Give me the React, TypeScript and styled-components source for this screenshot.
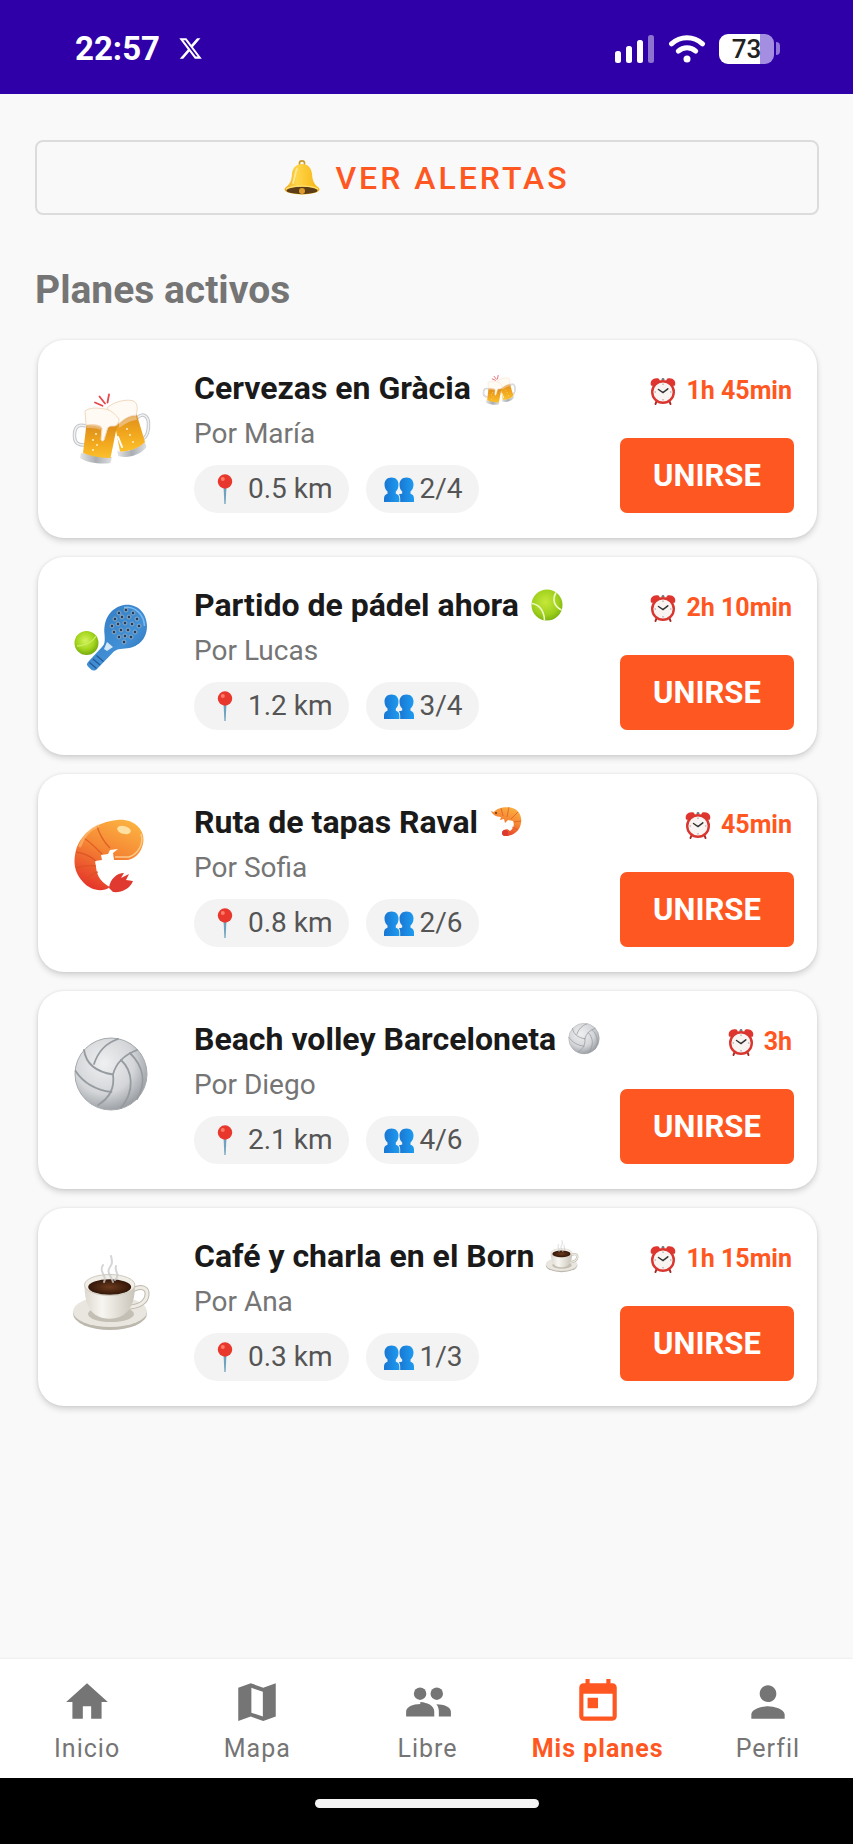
import React from 'react';
import styled, { createGlobalStyle } from 'styled-components';
import { MdHome, MdPerson, MdToday } from 'react-icons/md';

type IconProps = {
  size: number
};

type Plan = {
  title: string,
  host: string,
  distance: string,
  people: string,
  time: string,
  Hero: React.FC<IconProps>,
  Badge: React.FC<IconProps>
};

type NavItemProps = {
  label: string,
  icon: React.ReactNode,
  active?: boolean
};

const GlobalStyle = createGlobalStyle`
  * {
    box-sizing: border-box;
  }

  body {
    margin: 0;
    font-family: Roboto, "Liberation Sans", sans-serif;
    background: #f9f9f9;
  }

  svg {
    display: block;
    flex: none;
  }
`;

const Page = styled.div`
  display: flex;
  flex-direction: column;
  min-height: 100vh;
`;

const StatusBar = styled.header`
  display: flex;
  align-items: center;
  justify-content: space-between;
  height: 94px;
  padding: 3px 73px 0 75px;
  background: #2f00a8;
  color: #fff;
`;

const StatusGroup = styled.div<{ $gap: number }>`
  display: flex;
  align-items: center;
  gap: ${props => props.$gap}px;
`;

const Clock = styled.span`
  font-size: 33px;
  line-height: 40px;
  font-weight: 700;
`;

const Battery = styled.div`
  display: flex;
  align-items: center;
  gap: 2px;

  &::after {
    content: '';
    width: 4px;
    height: 13px;
    border-radius: 0 4px 4px 0;
    background: #8f76d8;
  }
`;

const BatteryLevel = styled.span`
  width: 55px;
  border-radius: 9px;
  background: linear-gradient(to right, #fff 75%, #a48ee2 75%);
  color: #222;
  font-size: 26px;
  line-height: 30px;
  font-weight: 500;
  text-align: center;
`;

const Main = styled.main`
  flex: 1;
  padding: 46px 34px 24px 35px;
`;

const AlertsButton = styled.button`
  display: flex;
  align-items: center;
  justify-content: center;
  gap: 15px;
  width: 100%;
  height: 75px;
  border: 2px solid #dcdcdc;
  border-radius: 8px;
  background: transparent;
  color: #ff5722;
  font: 500 32px/38px Roboto, sans-serif;
  letter-spacing: 3px;
  cursor: pointer;
`;

const SectionTitle = styled.h1`
  margin: 53px 0 28px;
  color: #757575;
  font-size: 39px;
  line-height: 44px;
  font-weight: 700;
`;

const PlanList = styled.ul`
  display: flex;
  flex-direction: column;
  gap: 19px;
  margin: 0;
  padding: 0 2px 0 3px;
  list-style: none;
`;

const Card = styled.li`
  display: flex;
  padding: 29px 23px 25px 33px;
  border-radius: 26px;
  background: #fff;
  box-shadow: 0 3px 6px rgba(0, 0, 0, 0.16), 0 0 3px rgba(0, 0, 0, 0.08);
`;

const HeroWrapper = styled.div`
  margin-right: 43px;
  padding-top: 15px;
`;

const CardBody = styled.div`
  flex: 1;
`;

const PlanTitle = styled.h2`
  display: flex;
  align-items: center;
  gap: 11px;
  height: 38px;
  margin: 0 0 10px;
  color: #1a1a1a;
  font-size: 32px;
  line-height: 38px;
  font-weight: 700;
`;

const Host = styled.p`
  margin: 0 0 14px;
  color: #757575;
  font-size: 28px;
  line-height: 34px;
`;

const ChipRow = styled.div`
  display: flex;
  gap: 17px;
`;

const Chip = styled.span`
  display: flex;
  align-items: center;
  gap: 6px;
  padding: 7px 16px 7px 18px;
  border-radius: 24px;
  background: #f3f3f3;
  color: #555;
  font-size: 28px;
  line-height: 34px;
`;

const CardSide = styled.div`
  display: flex;
  flex-direction: column;
  align-items: flex-end;
  justify-content: space-between;
`;

const TimeLeft = styled.span`
  display: flex;
  align-items: center;
  gap: 9px;
  padding: 7px 2px 0 0;
  color: #ff5722;
  font-size: 25px;
  line-height: 30px;
  font-weight: 700;
`;

const JoinButton = styled.button`
  width: 174px;
  height: 75px;
  border: 0;
  border-radius: 7px;
  background: #ff5722;
  color: #fff;
  font: 700 31px/36px Roboto, sans-serif;
  cursor: pointer;
`;

const Nav = styled.nav`
  display: flex;
  height: 119px;
  padding-left: 2px;
  background: #fff;
  box-shadow: 0 -1px 2px rgba(0, 0, 0, 0.05);
`;

const NavLink = styled.a<{ $active?: boolean }>`
  display: flex;
  flex: 1;
  flex-direction: column;
  align-items: center;
  gap: 7px;
  padding-top: 18px;
  color: ${props => (props.$active ? '#ff5722' : '#757575')};
  font-size: 25px;
  line-height: 30px;
  font-weight: ${props => (props.$active ? 700 : 400)};
  letter-spacing: 1px;
  text-decoration: none;
`;

const HomeBar = styled.footer`
  display: flex;
  justify-content: center;
  height: 66px;
  padding-top: 21px;
  background: #000;

  &::after {
    content: '';
    width: 224px;
    height: 9px;
    border-radius: 5px;
    background: #f4f4f4;
  }
`;

const XLogo: React.FC<IconProps> = ({ size }) => (
  <svg width={size} height={size} viewBox="0 0 24 24" fill="currentColor">
    <path d="M18.244 2.25h3.308l-7.227 8.26 8.502 11.24H16.17l-5.214-6.817L4.99 21.75H1.68l7.73-8.835L1.254 2.25H8.08l4.713 6.231zm-1.161 17.52h1.833L7.084 4.126H5.117z" />
  </svg>
);

const SignalIcon = () => (
  <svg width="40" height="28" viewBox="0 0 40 28" fill="#fff">
    <rect x="0" y="16" width="6" height="12" rx="2.5" />
    <rect x="11" y="11" width="6" height="17" rx="2.5" />
    <rect x="22" y="5" width="6" height="23" rx="2.5" />
    <rect x="33" y="0" width="6" height="28" rx="2.5" opacity="0.45" />
  </svg>
);

const WifiIcon = () => (
  <svg width="38" height="28" viewBox="0 0 38 28" fill="none" stroke="#fff" strokeWidth="5" strokeLinecap="round">
    <path d="M3.5 8.8C12.5.6 25.5.6 34.5 8.8" />
    <path d="M10.3 16.2c5-4.500 12.400-4.500 17.400 0" />
    <circle cx="19" cy="24" r="3.5" fill="#fff" stroke="none" />
  </svg>
);

const BellIcon: React.FC<IconProps> = ({ size }) => (
  <svg width={size} height={size} viewBox="0 0 36 36">
    <defs>
      <linearGradient id="bell" x1="0" x2="1">
        <stop offset="0" stopColor="#f0a81c" />
        <stop offset="0.35" stopColor="#ffd54a" />
        <stop offset="1" stopColor="#f7b512" />
      </linearGradient>
    </defs>
    <circle cx="18" cy="3.5" r="2.6" fill="none" stroke="#c99a2b" strokeWidth="1.6" />
    <path d="M18 4c6 0 9.5 4 10 10 .5 7 2 10 6.5 13.5 1.5 1.5 1 3-.5 4-7 4-25 4-32 0-1.5-1-2-2.5-.5-4C6 24 7.5 21 8 14 8.5 8 12 4 18 4z" fill="url(#bell)" />
    <ellipse cx="18" cy="30.5" rx="15.5" ry="3.7" fill="#5c3d17" />
    <path d="M2 29c6-4 26-4 32 0" fill="none" stroke="#ffe27a" strokeWidth="1.2" />
    <circle cx="18" cy="31" r="3" fill="#dd9a2e" />
    <path d="M13 9c-2 3-2 10-4 14" fill="none" stroke="#fff0a8" strokeWidth="1.8" strokeLinecap="round" opacity="0.8" />
  </svg>
);

const AlarmIcon: React.FC<IconProps> = ({ size }) => (
  <svg width={size} height={size} viewBox="0 0 28 28">
    <path d="M8 23l-1.500 4M20 23l1.500 4" stroke="#a32a26" strokeWidth="2" strokeLinecap="round" />
    <path d="M2 8.5C.5 3.5 5 0 10 1.800L11 4 4.500 9zM26 8.500C27.500 3.500 23 0 18 1.800L17 4l6.500 5z" fill="#e0352f" />
    <circle cx="14" cy="2.3" r="1.4" fill="#777" />
    <circle cx="14" cy="15" r="10.8" fill="#f9f4f2" stroke="#d93630" strokeWidth="2.4" />
    <path d="M14 6.5V8M14 22v1.500M5.500 15H7M21 15h1.500" stroke="#999" strokeWidth="1" />
    <path d="M9.5 12.5l4.500 3 4.800-3.700" fill="none" stroke="#333" strokeWidth="1.5" strokeLinecap="round" />
  </svg>
);

const PinIcon: React.FC<IconProps> = ({ size }) => (
  <svg width={size} height={size} viewBox="0 0 30 30">
    <path d="M11.500 12h3l-.9 18h-1.200z" fill="#6fa3bd" />
    <circle cx="13" cy="7.5" r="7.2" fill="#e8382d" />
    <circle cx="10.8" cy="5" r="2" fill="#ff7a68" />
  </svg>
);

const PeopleIcon: React.FC<IconProps> = ({ size }) => (
  <svg width={size} height={size} viewBox="0 0 30 30">
    <defs>
      <linearGradient id="people" x1="0" x2="1">
        <stop offset="0" stopColor="#1976d2" />
        <stop offset="1" stopColor="#1e9bf0" />
      </linearGradient>
    </defs>
    <g fill="url(#people)">
      <path d="M7.500 3.500c4.400 0 7 2.800 7 7 0 3.500-1 5.500-2.700 7v2.300c2.600.7 3.600 2.200 3.600 5V28H0v-3.200c0-2.800 1-4.300 3.500-5v-2.300c-1.700-1.500-3-3.500-3-7 0-4.200 2.600-7 7-7z" />
      <path d="M22.500 3.500c4.400 0 7 2.800 7 7 0 3.500-1.300 5.500-3 7v2.300c2.500.7 3.500 2.200 3.500 5V28H16.200v-3.200c0-2-.5-3.500-1.400-4.500 1.200-.3 2.200-.3 3.400-.7v-2.100c-1.700-1.500-2.700-3.500-2.700-7 0-4.200 2.600-7 7-7z" />
    </g>
  </svg>
);

const BeersIcon: React.FC<IconProps> = ({ size }) => (
  <svg width={size} height={size} viewBox="0 0 80 80">
    <defs>
      <linearGradient id="beer" x1="0" y1="0" x2="0" y2="1">
        <stop offset="0" stopColor="#d98c1c" />
        <stop offset="0.5" stopColor="#f0a41c" />
        <stop offset="1" stopColor="#fbc02d" />
      </linearGradient>
      <linearGradient id="glass" x1="0" x2="1">
        <stop offset="0" stopColor="#e4e5e7" />
        <stop offset="0.5" stopColor="#a9adb2" />
        <stop offset="1" stopColor="#dfe1e3" />
      </linearGradient>
    </defs>
    <path d="M24 18.5l7.500 3.300M28.500 12.500l5.500 7M38 10.500l-1.500 8" stroke="#e5484d" strokeWidth="1.8" strokeLinecap="round" />
    <path d="M66 34c6-6 11-2 11.500 5S76 54 71 55" fill="none" stroke="#c3c6ca" strokeWidth="3.5" />
    <path d="M66 34c6-6 11-2 11.500 5S76 54 71 55" fill="none" stroke="#f0f1f2" strokeWidth="1.5" />
    <path d="M46 67c9 2 20-2 28-9l1.500 5c-6 8-19 12-28 9z" fill="url(#glass)" />
    <path d="M43 36l22-8 9 30c-7 7-16 9.500-25 9.500z" fill="url(#beer)" />
    <path d="M36 24c5-5 16-9 25-7.500 6 1.500 6 8 4 15-7 0-11 3-17 8z" fill="#fffaf3" stroke="#f1d9bf" strokeWidth="1" />
    <path d="M48 40c5-4 11-8 17-8l1 4c-6 0-12 4-18 8z" fill="#eec28b" opacity="0.8" />
    <path d="M15 42c-7-2-11 0-11.500 8S6 61 13 61" fill="none" stroke="#c3c6ca" strokeWidth="3.5" />
    <path d="M15 42c-7-2-11 0-11.500 8S6 61 13 61" fill="none" stroke="#f0f1f2" strokeWidth="1.5" />
    <path d="M10 69l31 4-1.500 6c-9 1.500-23 0-30.500-5z" fill="url(#glass)" />
    <path d="M15.500 40l30.500 2-6.500 32c-10 0-19-1.500-27.500-5z" fill="url(#beer)" />
    <path d="M14 27c5-4 13-3 20-2 6 1 10 5 14 10 0 4-2 7-5 7-4 0-6 0-7 4l-3 10c-1 2-3 1-3-1l1-11c-5-3-12-3-16-3z" fill="#fffaf3" stroke="#f1d9bf" strokeWidth="1" />
    <path d="M16 41c4-1 10-1 14 1l-.5 4c-4-2-10-2-14-2z" fill="#eec28b" opacity="0.7" />
    <g fill="#fff1c4">
      <circle cx="25" cy="50" r="1" />
      <circle cx="22" cy="56" r="1.1" />
      <circle cx="26" cy="61" r="0.9" />
      <circle cx="22" cy="66" r="1" />
      <circle cx="56" cy="45" r="1" />
      <circle cx="59" cy="51" r="1" />
      <circle cx="62" cy="58" r="0.9" />
    </g>
    <path d="M47 53l4 10" stroke="#fff" strokeWidth="2" strokeLinecap="round" />
  </svg>
);

// Holes of the padel racket, in viewBox units
const HOLES = [
  [48, 12], [55, 9], [62, 12], [44, 18], [51, 16], [58, 16], [66, 18],
  [41, 25], [47, 23], [54, 22], [61, 23], [68, 25], [43, 31], [50, 29],
  [57, 29], [64, 31], [48, 36], [54, 35], [60, 36], [53, 41]
];

const RacketIcon: React.FC<IconProps> = ({ size }) => (
  <svg width={size} height={size} viewBox="0 0 80 80">
    <defs>
      <linearGradient id="racket" x1="0" y1="0" x2="1" y2="1">
        <stop offset="0" stopColor="#2f78bd" />
        <stop offset="0.6" stopColor="#4290d6" />
        <stop offset="1" stopColor="#2563a8" />
      </linearGradient>
      <radialGradient id="padelBall" cx="0.45" cy="0.4" r="0.6">
        <stop offset="0" stopColor="#d3f25c" />
        <stop offset="0.6" stopColor="#a5d61e" />
        <stop offset="1" stopColor="#76ab10" />
      </radialGradient>
    </defs>
    <path d="M53 4c13-2 23 8 23 21 0 14-10 22-22 22.500-7 .3-10 1.500-13 5L26 68c-2 2-4 2-6 .5l-3-3c-1.500-1.500-1.500-3 .5-5L31 46c3-3 3-6 2.500-13C32 17 41 6 53 4z" fill="url(#racket)" />
    <path d="M53 6.500c11-1.500 20 7 20.500 18.500" fill="none" stroke="#7dbbf0" strokeWidth="1.5" />
    <path d="M36 41l6 5-6 4-3-2z" fill="#d5e8f8" />
    <g stroke="#a9bfd0" strokeWidth="0.8">
      {HOLES.map(([cx, cy]) => (
        <circle key={`${cx}-${cy}`} cx={cx} cy={cy} r="1.9" fill="#203e61" />
      ))}
    </g>
    <path d="M18.500 61.500l7 6M22 58l7 6M25.500 54.500l7 6" stroke="#235a94" strokeWidth="1.2" />
    <circle cx="15.5" cy="42" r="12" fill="url(#padelBall)" />
    <path d="M6 45c6 0 15-3 19-10" fill="none" stroke="#c9ee5f" strokeWidth="1.4" />
  </svg>
);

const TennisBallIcon: React.FC<IconProps> = ({ size }) => (
  <svg width={size} height={size} viewBox="0 0 34 34">
    <defs>
      <radialGradient id="tennis" cx="0.45" cy="0.4" r="0.6">
        <stop offset="0" stopColor="#c6e83a" />
        <stop offset="0.7" stopColor="#9fd01c" />
        <stop offset="1" stopColor="#7fb510" />
      </radialGradient>
    </defs>
    <circle cx="17" cy="17" r="15.5" fill="url(#tennis)" />
    <path d="M2 15.500c7 1 12 7 12.500 16.500M26 4.500c-4 7-2 14 5.500 17.500" fill="none" stroke="#f0fac8" strokeWidth="1.6" />
  </svg>
);

const ShrimpGradient: React.FC<{ id: string }> = ({ id }) => (
  <linearGradient id={id} x1="0.7" y1="0" x2="0.3" y2="1">
    <stop offset="0" stopColor="#fbb040" />
    <stop offset="0.45" stopColor="#f58634" />
    <stop offset="1" stopColor="#e5342a" />
  </linearGradient>
);

const ShrimpIcon: React.FC<IconProps> = ({ size }) => (
  <svg width={size} height={size} viewBox="0 0 80 80">
    <defs>
      <ShrimpGradient id="shrimp" />
    </defs>
    <path d="M46 2c15-2 27 8 26.500 20C72 32 66 40 57 42H43l-1-7 5-4-8 1-2 4-7 1 1 5-7 1 1 6c1 10 6 16 14 20-8 6-20 3-27-5C3 54 2 44 5 32 10 15 26 4 46 2z" fill="url(#shrimp)" />
    <path d="M38 70c1-9 8-15 15-15l-3 5 8-4-3 6 7 1c-3 8-12 12-20 11z" fill="#e0392f" />
    <path d="M26 8c2 7 7 16 13 22M13 20c6 4 12 10 18 16M5 34c7 1 13 3 20 9M5 50c6-2 13-3 20-2M14 63c4-5 8-8 13-9" fill="none" stroke="#d94f22" strokeWidth="1.4" opacity="0.7" />
    <path d="M27 8c-9 4-15 11-18 20" fill="none" stroke="#ffc27a" strokeWidth="3" strokeLinecap="round" opacity="0.6" />
    <ellipse cx="53" cy="12" rx="7" ry="4" fill="#ffe0a0" transform="rotate(15 53 12)" />
    <path d="M70 16c3 10-3 20-12 23H44" fill="none" stroke="#fcc98a" strokeWidth="1.5" />
  </svg>
);

const ShrimpSmallIcon: React.FC<IconProps> = ({ size }) => (
  <svg width={size} height={size} viewBox="0 0 34 34">
    <defs>
      <ShrimpGradient id="shrimpSmall" />
    </defs>
    <path d="M2 6l3 1C9 2 19 1 26 4c5 3 7 9 6 14-1 8-8 13-15 13-4 0-5-4-2-6 2-1 4-1 6 1 3-2 5-6 3-10l-5-1-3 3-1-4-4 1 1-3c-5 0-9-3-10-6z" fill="url(#shrimpSmall)" />
    <path d="M12 3l2 8M20 2l-2 10M29 7l-7 7M32 16l-7 1M29 25l-6-3" stroke="#d94f22" strokeWidth="0.9" opacity="0.7" />
    <circle cx="7" cy="8" r="1" fill="#6b2b12" />
    <circle cx="16" cy="28" r="3" fill="#dc3a30" />
  </svg>
);

const VolleyballIcon: React.FC<IconProps> = ({ size }) => (
  <svg width={size} height={size} viewBox="0 0 80 80">
    <defs>
      <radialGradient id="volley" cx="0.4" cy="0.35" r="0.7">
        <stop offset="0" stopColor="#eff0f1" />
        <stop offset="0.6" stopColor="#d3d5d8" />
        <stop offset="1" stopColor="#94989d" />
      </radialGradient>
    </defs>
    <circle cx="40" cy="39" r="36" fill="url(#volley)" stroke="#a6aaae" strokeWidth="1" />
    <g fill="none" stroke="#969ba0" strokeWidth="1.8" strokeLinecap="round">
      <path d="M13 15c2 14 13 22 29 24.500M42 39.500C45 28 53 20 66 15M42 39.500C44 54 37 64 27 70" />
      <path d="M23 29C27 17 35 8 47 4" />
      <path d="M4.500 36c8 12 20 19 36 21" />
      <path d="M50 25c12 11 14 31 0 48M59 18c13 13 17 29 7 46" />
    </g>
  </svg>
);

const CoffeeIcon: React.FC<IconProps> = ({ size }) => (
  <svg width={size} height={size} viewBox="0 0 80 80">
    <defs>
      <linearGradient id="cup" x1="0" x2="1">
        <stop offset="0" stopColor="#dcd8cf" />
        <stop offset="0.35" stopColor="#f8f6f1" />
        <stop offset="1" stopColor="#c9c4b9" />
      </linearGradient>
      <radialGradient id="coffee">
        <stop offset="0" stopColor="#6b3a1d" />
        <stop offset="1" stopColor="#331708" />
      </radialGradient>
    </defs>
    <ellipse cx="39" cy="61.5" rx="37" ry="16.5" fill="#bdb8ad" />
    <ellipse cx="39" cy="59.5" rx="37" ry="15.5" fill="#e9e6df" />
    <ellipse cx="40" cy="62" rx="23" ry="8" fill="#c4bfb4" />
    <path d="M62 38c8-5 15-2 14 5-1 8-8 11-17 12" fill="none" stroke="#bdb7ab" strokeWidth="5" />
    <path d="M62 38c8-5 15-2 14 5-1 8-8 11-17 12" fill="none" stroke="#efece6" strokeWidth="3" />
    <path d="M13.500 33c0 18 5 27 13 31 7 3.500 17 3.500 24 0 8-4 13.500-13 13.500-31z" fill="url(#cup)" />
    <ellipse cx="38.7" cy="33" rx="25.2" ry="10.5" fill="#f1eee8" stroke="#cfcabf" strokeWidth="1" />
    <ellipse cx="38.7" cy="35" rx="21.5" ry="7.7" fill="url(#coffee)" />
    <path d="M33 30c4-7-6-9-1-17M42 30c-2-7-7-9-3-15 3-4 2-6 1-11M44 28c6-6-1-8 1-14" fill="none" stroke="#c9cacc" strokeWidth="2" strokeLinecap="round" opacity="0.8" />
  </svg>
);

const MapIcon: React.FC<IconProps> = ({ size }) => (
  <svg width={size} height={size} viewBox="0 0 24 24" fill="currentColor">
    <path fillRule="evenodd" d="M3 5.100L9 3l6 2.100L21 3v16l-6 2.100L9 19l-6 2.100zM9.300 5.200v11.900l5.500 1.900V7.100z" />
  </svg>
);

const GroupIcon: React.FC<IconProps> = ({ size }) => (
  <svg width={size} height={size} viewBox="0 0 24 24" fill="currentColor">
    <circle cx="8.2" cy="8" r="3" />
    <circle cx="16.2" cy="8" r="3" />
    <path d="M1.500 19v-2.300c0-2.400 3.200-3.600 6.800-3.700V12c3.700.2 6.700 1.900 6.700 4.500V19z" />
    <path d="M16 13.100c3.600 0 7 1.300 7 3.600V19h-5.800v-2.500c0-1.400-.4-2.500-1.200-3.400z" />
  </svg>
);

const PLANS: Plan[] = [
  { title: 'Cervezas en Gràcia', host: 'María', distance: '0.5 km', people: '2/4', time: '1h 45min', Hero: BeersIcon, Badge: BeersIcon },
  { title: 'Partido de pádel ahora', host: 'Lucas', distance: '1.2 km', people: '3/4', time: '2h 10min', Hero: RacketIcon, Badge: TennisBallIcon },
  { title: 'Ruta de tapas Raval', host: 'Sofia', distance: '0.8 km', people: '2/6', time: '45min', Hero: ShrimpIcon, Badge: ShrimpSmallIcon },
  { title: 'Beach volley Barceloneta', host: 'Diego', distance: '2.1 km', people: '4/6', time: '3h', Hero: VolleyballIcon, Badge: VolleyballIcon },
  { title: 'Café y charla en el Born', host: 'Ana', distance: '0.3 km', people: '1/3', time: '1h 15min', Hero: CoffeeIcon, Badge: CoffeeIcon }
];

const PlanCard: React.FC<Plan> = props => {
  const { Hero, Badge } = props;

  return (
    <Card>
      <HeroWrapper>
        <Hero size={80} />
      </HeroWrapper>
      <CardBody>
        <PlanTitle>
          {props.title}
          <Badge size={34} />
        </PlanTitle>
        <Host>Por {props.host}</Host>
        <ChipRow>
          <Chip>
            <PinIcon size={30} />
            {props.distance}
          </Chip>
          <Chip>
            <PeopleIcon size={30} />
            {props.people}
          </Chip>
        </ChipRow>
      </CardBody>
      <CardSide>
        <TimeLeft>
          <AlarmIcon size={28} />
          {props.time}
        </TimeLeft>
        <JoinButton type="button">UNIRSE</JoinButton>
      </CardSide>
    </Card>
  );
};

const NavItem: React.FC<NavItemProps> = props => (
  <NavLink href="#" $active={props.active} aria-current={props.active ? 'page' : undefined}>
    {props.icon}
    {props.label}
  </NavLink>
);

const App = () => {
  return (
    <Page>
      <GlobalStyle />
      <StatusBar>
        <StatusGroup $gap={18}>
          <Clock>22:57</Clock>
          <XLogo size={25} />
        </StatusGroup>
        <StatusGroup $gap={13}>
          <SignalIcon />
          <WifiIcon />
          <Battery>
            <BatteryLevel>73</BatteryLevel>
          </Battery>
        </StatusGroup>
      </StatusBar>
      <Main>
        <AlertsButton type="button">
          <BellIcon size={36} />
          VER ALERTAS
        </AlertsButton>
        <SectionTitle>Planes activos</SectionTitle>
        <PlanList>
          {PLANS.map(plan => (
            <PlanCard key={plan.title} {...plan} />
          ))}
        </PlanList>
      </Main>
      <Nav>
        <NavItem label="Inicio" icon={<MdHome size={50} />} />
        <NavItem label="Mapa" icon={<MapIcon size={50} />} />
        <NavItem label="Libre" icon={<GroupIcon size={50} />} />
        <NavItem label="Mis planes" icon={<MdToday size={50} />} active />
        <NavItem label="Perfil" icon={<MdPerson size={50} />} />
      </Nav>
      <HomeBar />
    </Page>
  );
};

export default App;
